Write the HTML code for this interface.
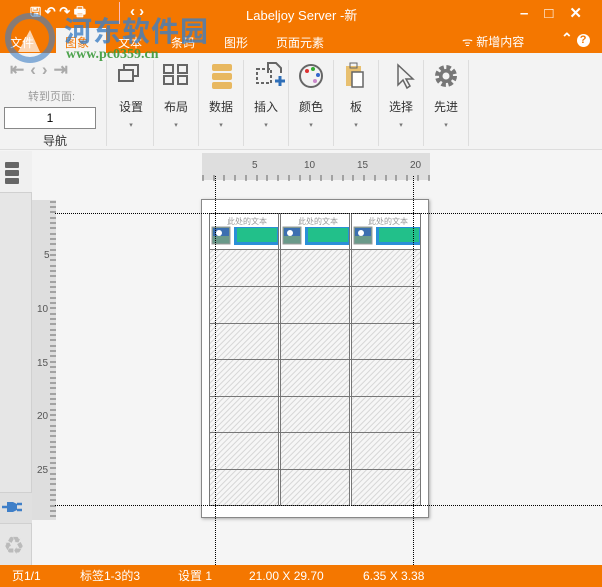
<!DOCTYPE html>
<html><head><meta charset="utf-8"><style>
*{margin:0;padding:0;box-sizing:border-box}
body{width:602px;height:587px;overflow:hidden;background:#f5f5f5;font-family:"Liberation Sans","Noto Sans CJK SC",sans-serif;position:relative}
.a{position:absolute}
.or{background:#f47700}
.w{color:#fff}
.lbl{font-size:12px;color:#333;text-align:center;width:44px}
.arr{font-size:7px;color:#777;width:44px;text-align:center}
.sep{width:1px;background:#ddd;top:60px;height:86px}
.dv{border-left:1px dotted #000;width:0}
.dh{border-top:1px dotted #000;height:0}
</style></head><body>
<div class="a or" style="left:0;top:0;width:602px;height:53px"></div>
<div class="a w" style="left:246px;top:5px;font-size:13px">Labeljoy Server -新</div>
<div class="a w" style="left:30px;top:3px;font-size:13px;font-weight:bold">🖫 ↶ ↷ 🖶</div>
<div class="a" style="left:119px;top:2px;width:1px;height:22px;background:#fbb"></div>
<div class="a w" style="left:130px;top:3px;font-size:15px;font-weight:bold">‹ ›</div>
<div class="a w" style="left:520px;top:4px;font-size:15px;font-weight:bold;letter-spacing:16px">–□✕</div>
<div class="a w" style="left:10px;top:34px;font-size:12px">文件</div>
<div class="a" style="left:56px;top:28px;width:50px;height:25px;background:#f3f3f3"></div>
<div class="a" style="left:65px;top:34px;font-size:12px;color:#f47700">图象</div>
<div class="a w" style="left:118px;top:34px;font-size:12px">文本</div>
<div class="a w" style="left:171px;top:34px;font-size:12px">条码</div>
<div class="a w" style="left:224px;top:34px;font-size:12px">图形</div>
<div class="a w" style="left:276px;top:34px;font-size:12px">页面元素</div>
<div class="a w" style="left:462px;top:33px;font-size:12px">ᯤ 新增内容</div>
<div class="a w" style="left:561px;top:30px;font-size:14px;font-weight:bold">⌃ <span style="display:inline-block;width:13px;height:13px;border-radius:50%;background:#fff;color:#f47700;font-size:11px;text-align:center;line-height:13px">?</span></div>
<div class="a" style="left:0;top:53px;width:602px;height:97px;background:#f3f3f3;border-bottom:1px solid #ddd"></div>
<div class="a" style="left:10px;top:60px;font-size:17px;color:#aaa;letter-spacing:6px;font-weight:bold">⇤‹›⇥</div>
<div class="a" style="left:28px;top:88px;font-size:11px;color:#999">转到页面:</div>
<div class="a" style="left:4px;top:107px;width:92px;height:22px;background:#fff;border:1px solid #888;font-size:12px;text-align:center;line-height:20px">1</div>
<div class="a" style="left:43px;top:132px;font-size:12px;color:#333">导航</div>
<div class="a sep" style="left:106px"></div><div class="a sep" style="left:153px"></div><div class="a sep" style="left:198px"></div><div class="a sep" style="left:243px"></div><div class="a sep" style="left:288px"></div><div class="a sep" style="left:333px"></div><div class="a sep" style="left:378px"></div><div class="a sep" style="left:423px"></div><div class="a sep" style="left:468px"></div>
<svg class="a" style="left:0;top:53px" width="602" height="45">
<g fill="none" stroke="#666" stroke-width="2"><rect x="119" y="17" width="14" height="11"/><path d="M124 17v-5h14v11h-5"/>
<rect x="164" y="12" width="9" height="8"/><rect x="178" y="12" width="9" height="8"/><rect x="164" y="23" width="9" height="8"/><rect x="178" y="23" width="9" height="8"/>
<path d="M268 20v-10h8l5 5v5" /><rect x="257" y="16" width="14" height="14" stroke-dasharray="3 2"/><path d="M398 12l0 20l5-5l4 8l3-2l-4-7l7 0z" stroke-width="1.5"/></g>
<path d="M275 28h10M280 23v10" stroke="#2f6fb8" stroke-width="3"/>
<g fill="#e8b860"><rect x="212" y="11" width="20" height="7" rx="2"/><rect x="212" y="20" width="20" height="7" rx="2"/><rect x="212" y="29" width="20" height="7" rx="2"/></g>
<circle cx="311" cy="23" r="11" fill="none" stroke="#666" stroke-width="2"/><circle cx="307" cy="18" r="2" fill="#d33"/><circle cx="313" cy="16" r="2" fill="#3a3"/><circle cx="318" cy="22" r="2" fill="#36c"/><circle cx="315" cy="28" r="2" fill="#c8c"/>
<rect x="346" y="13" width="15" height="20" fill="#e8c070"/><rect x="352" y="19" width="11" height="15" fill="#fff" stroke="#666" stroke-width="1.5"/><rect x="350" y="10" width="7" height="5" fill="none" stroke="#666"/>
<circle cx="446" cy="23" r="8" fill="none" stroke="#777" stroke-width="6" stroke-dasharray="4 2.3"/><circle cx="446" cy="23" r="7" fill="#777"/><circle cx="446" cy="23" r="3.5" fill="#f3f3f3"/>
</svg>
<!-- watermark -->
<svg class="a" style="left:4px;top:12px" width="52" height="52"><circle cx="26" cy="26" r="22" fill="none" stroke="#3d7fc4" stroke-width="6" opacity=".6"/><path d="M14 40l12-22 10 22z" fill="#fff" opacity=".7"/></svg>
<div class="a" style="left:64px;top:10px;font-size:28px;font-weight:bold;color:#3d7fc4;opacity:.8;letter-spacing:1px">河东软件园</div>
<div class="a" style="left:66px;top:47px;font-size:14px;font-weight:bold;color:#3a9a3a;font-family:'Liberation Serif',serif;opacity:.9">www.pc0359.cn</div>
<div class="lbl a" style="left:109px;top:98px">设置</div><div class="a lbl" style="left:154px;top:98px">布局</div><div class="a lbl" style="left:199px;top:98px">数据</div><div class="a lbl" style="left:244px;top:98px">插入</div><div class="a lbl" style="left:289px;top:98px">颜色</div><div class="a lbl" style="left:334px;top:98px">板</div><div class="a lbl" style="left:379px;top:98px">选择</div><div class="a lbl" style="left:424px;top:98px">先进</div>
<div class="a arr" style="left:109px;top:121px">▾</div><div class="a arr" style="left:154px;top:121px">▾</div><div class="a arr" style="left:199px;top:121px">▾</div><div class="a arr" style="left:244px;top:121px">▾</div><div class="a arr" style="left:289px;top:121px">▾</div><div class="a arr" style="left:334px;top:121px">▾</div><div class="a arr" style="left:379px;top:121px">▾</div><div class="a arr" style="left:424px;top:121px">▾</div>
<div class="a" style="left:0;top:151px;width:32px;height:414px;background:#e6e6e6;border-right:1px solid #d0d0d0"></div>
<div class="a" style="left:0;top:151px;width:32px;height:42px;background:#f0f0f0;border-bottom:1px solid #d0d0d0"></div>
<svg class="a" style="left:5px;top:162px" width="16" height="22"><g fill="#666"><rect width="14" height="6" rx="1"/><rect y="8" width="14" height="6" rx="1"/><rect y="16" width="14" height="6" rx="1"/></g></svg>
<div class="a" style="left:0;top:492px;width:32px;height:32px;background:#e0e0e0;border-top:1px solid #d0d0d0;border-bottom:1px solid #d0d0d0"></div>
<svg class="a" style="left:2px;top:499px" width="22" height="16"><path d="M0 8h5M15 5h5M15 11h5" stroke="#3f7fc8" stroke-width="2.5"/><path d="M5 3h6l4 2v6l-4 2h-6z" fill="#3f7fc8"/></svg>
<div class="a" style="left:5px;top:532px;font-size:18px;color:#bbb">♻</div>
<div class="a" style="left:202px;top:153px;width:228px;height:27px;background:#dedede"></div>
<svg class="a" style="left:202px;top:153px" width="230" height="30"><g stroke="#666" stroke-width="1">
<path d="M1 22v6M12 22v6M22 22v6M33 22v6M44 22v6M55 22v6M65 22v6M76 22v6M87 22v6M98 22v6M108 22v6M119 22v6M130 22v6M141 22v6M151 22v6M162 22v6M173 22v6M184 22v6M194 22v6M205 22v6M216 22v6M227 22v6"/></g>
<g font-size="10" fill="#555" font-family="Liberation Sans"><text x="50" y="15">5</text><text x="102" y="15">10</text><text x="155" y="15">15</text><text x="208" y="15">20</text></g></svg>
<div class="a" style="left:32px;top:200px;width:24px;height:320px;background:#dedede"></div>
<svg class="a" style="left:32px;top:200px" width="26" height="322"><g stroke="#666"><path d="M18 2h6M18 7h6M18 12h6M18 18h6M18 23h6M18 28h6M18 34h6M18 39h6M18 44h6M18 50h6M18 55h6M18 60h6M18 66h6M18 71h6M18 76h6M18 82h6M18 87h6M18 92h6M18 98h6M18 103h6M18 108h6M18 114h6M18 119h6M18 124h6M18 130h6M18 135h6M18 140h6M18 146h6M18 151h6M18 156h6M18 162h6M18 167h6M18 172h6M18 178h6M18 183h6M18 188h6M18 194h6M18 199h6M18 204h6M18 210h6M18 215h6M18 220h6M18 226h6M18 231h6M18 236h6M18 242h6M18 247h6M18 252h6M18 258h6M18 263h6M18 268h6M18 274h6M18 279h6M18 284h6M18 290h6M18 295h6M18 300h6M18 306h6M18 311h6M18 316h6"/></g>
<g font-size="10" fill="#555" font-family="Liberation Sans"><text x="12" y="58">5</text><text x="5" y="112">10</text><text x="5" y="166">15</text><text x="5" y="219">20</text><text x="5" y="273">25</text></g></svg>
<div class="a" style="left:201px;top:199px;width:228px;height:319px;background:#fff;border:1px solid #888;box-shadow:1px 1px 3px #aaa"></div>
<svg class="a" style="left:201px;top:199px" width="230" height="320">
<defs><pattern id="h" width="4" height="4" patternUnits="userSpaceOnUse" patternTransform="rotate(45)"><rect width="4" height="4" fill="#f6f6f6"/><rect width="1" height="4" fill="#d6d6d6"/></pattern></defs>
<g><rect x="8" y="50" width="69" height="256" fill="url(#h)"/><rect x="79" y="50" width="69" height="256" fill="url(#h)"/><rect x="150" y="50" width="69" height="256" fill="url(#h)"/></g>
<g fill="none" stroke="#777" stroke-width="1"><rect x="8.5" y="14.5" width="69" height="292"/><rect x="79.5" y="14.5" width="69" height="292"/><rect x="150.5" y="14.5" width="69" height="292"/>
<path d="M8 50.5h212M8 87.5h212M8 124.5h212M8 160.5h212M8 197.5h212M8 233.5h212M8 270.5h212"/></g>
<g font-size="8" fill="#999" font-family="Noto Sans CJK SC"><text x="26" y="25">此处的文本</text><text x="97" y="25">此处的文本</text><text x="167" y="25">此处的文本</text></g>
<g><rect x="11" y="28" width="18" height="17" fill="#6a9a8a" stroke="#999"/><rect x="12" y="29" width="16" height="8" fill="#3c6fb0"/><circle cx="18" cy="34" r="3" fill="#fff"/>
<rect x="82" y="28" width="18" height="17" fill="#6a9a8a" stroke="#999"/><rect x="83" y="29" width="16" height="8" fill="#3c6fb0"/><circle cx="89" cy="34" r="3" fill="#fff"/>
<rect x="153" y="28" width="18" height="17" fill="#6a9a8a" stroke="#999"/><rect x="154" y="29" width="16" height="8" fill="#3c6fb0"/><circle cx="160" cy="34" r="3" fill="#fff"/>
<rect x="33" y="28" width="44" height="18" fill="#2a8fd8"/><rect x="36" y="29" width="40" height="14" fill="#22c08a"/>
<rect x="104" y="28" width="44" height="18" fill="#2a8fd8"/><rect x="107" y="29" width="40" height="14" fill="#22c08a"/>
<rect x="175" y="28" width="44" height="18" fill="#2a8fd8"/><rect x="178" y="29" width="40" height="14" fill="#22c08a"/></g>
</svg>
<div class="a dv" style="left:215px;top:176px;height:389px"></div>
<div class="a dv" style="left:413px;top:176px;height:389px"></div>
<div class="a dh" style="left:55px;top:213px;width:547px"></div>
<div class="a dh" style="left:55px;top:505px;width:547px"></div>
<div class="a or w" style="left:0;top:565px;width:602px;height:22px;font-size:12px;line-height:22px">
<span class="a" style="left:12px">页1/1</span><span class="a" style="left:80px">标签1-3的3</span><span class="a" style="left:178px">设置 1</span><span class="a" style="left:249px">21.00 X 29.70</span><span class="a" style="left:363px">6.35 X 3.38</span></div>
</body></html>
